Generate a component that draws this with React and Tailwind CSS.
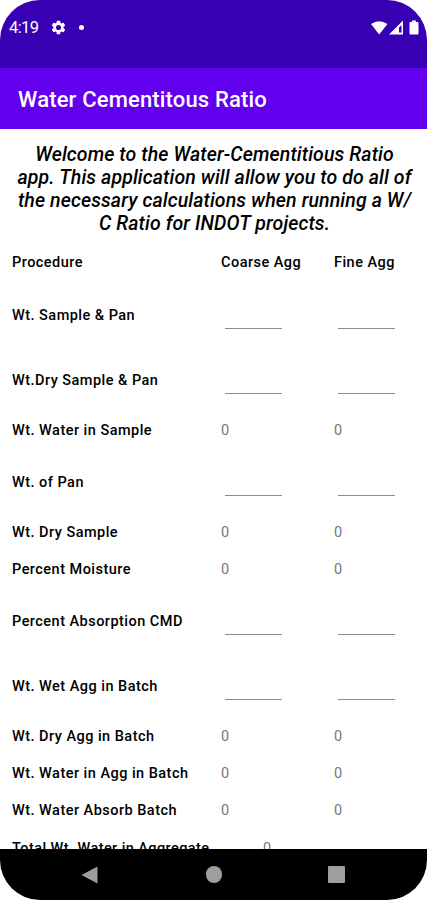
const ROWS = [
  { label: 'Wt. Sample & Pan', input: true },
  { label: 'Wt.Dry Sample & Pan', input: true },
  { label: 'Wt. Water in Sample' },
  { label: 'Wt. of Pan', input: true },
  { label: 'Wt. Dry Sample' },
  { label: 'Percent Moisture' },
  { label: 'Percent Absorption CMD', input: true },
  { label: 'Wt. Wet Agg in Batch', input: true },
  { label: 'Wt. Dry Agg in Batch' },
  { label: 'Wt. Water in Agg in Batch' },
  { label: 'Wt. Water Absorb Batch' },
];

const INTRO = [
  'Welcome to the Water-Cementitious Ratio',
  'app. This application will allow you to do all of',
  'the necessary calculations when running a W/',
  'C Ratio for INDOT projects.',
];

function StatusBar() {
  return (
    <div className="flex h-[68px] shrink-0 items-start justify-between bg-[#3700b3] pt-[17px] pl-[9px] pr-[7px] text-white">
      <div className="flex h-5 items-center">
        <span className="w-[41px] pt-0.5 text-[16.5px] leading-5 tracking-[-0.6px]">4:19</span>
        <svg className="h-[17px] w-[17px]" viewBox="0 0 24 24" fill="currentColor">
          <path d="M19.14 12.94c.04-.3.06-.61.06-.94s-.02-.64-.07-.94l2.03-1.58a.49.49 0 0 0 .12-.61l-1.92-3.32a.49.49 0 0 0-.59-.22l-2.39.96a7 7 0 0 0-1.62-.94l-.36-2.54A.48.48 0 0 0 13.92 2.400h-3.840a.48.48 0 0 0-.47.41l-.36 2.540c-.59.24-1.130.57-1.620.94l-2.390-.96a.49.49 0 0 0-.59.22L2.740 8.870a.48.48 0 0 0 .12.61l2.030 1.580c-.05.3-.09.63-.09.94s.02.64.07.94l-2.030 1.580a.49.49 0 0 0-.12.61l1.920 3.320c.12.22.37.29.59.22l2.390-.96c.5.38 1.030.7 1.620.94l.36 2.540c.05.24.24.41.48.41h3.840c.24 0 .44-.17.47-.41l.36-2.540a7 7 0 0 0 1.620-.94l2.390.96c.22.08.47 0 .59-.22l1.920-3.320a.48.48 0 0 0-.12-.61zM12 15.600a3.600 3.600 0 1 1 0-7.200 3.600 3.600 0 0 1 0 7.200z" />
        </svg>
        <span className="ml-3 h-[5px] w-[5px] rounded-full bg-white" />
      </div>
      <div className="flex h-5 items-center">
        <svg className="h-[15px] w-[50px]" viewBox="0 0 50 15" fill="currentColor">
          <path d="M1 4Q9-1.500 17.500 4L9.200 14.500z" />
          <path fillRule="evenodd" d="M19 14.500L33 0.500V14.500zM29 7.500V12.500H31.500V5z" />
          <path d="M42 0.500h4v1.500h1.500q1 0 1 1v10.500q0 1-1 1h-7q-1 0-1-1V3q0-1 1-1h1.500z" />
        </svg>
      </div>
    </div>
  );
}

function Field() {
  return (
    <div className="flex h-full items-end pb-[17px] pl-1">
      <div className="h-px w-[57px] bg-[#8c8c8c]" />
    </div>
  );
}

function Row({ label, input }) {
  return (
    <div className={`grid shrink-0 grid-cols-[209px_113px_1fr] items-center ${input ? 'h-[65px]' : 'h-[37px]'}`}>
      <div className={`font-medium whitespace-nowrap ${input ? 'pt-[5px]' : 'pt-[3px]'}`}>{label}</div>
      {input ? <Field /> : <div className="pt-[3px] text-[#777]">0</div>}
      {input ? <Field /> : <div className="pt-[3px] text-[#777]">0</div>}
    </div>
  );
}

export default function App() {
  return (
    <div className="h-[900px] w-[427px] bg-white font-[Roboto,sans-serif]">
      <div className="flex h-full flex-col overflow-hidden rounded-[40px] bg-white">
        <StatusBar />
        <header className="flex h-[61px] shrink-0 items-center bg-[#6200ee] pt-0.5 pl-[18px]">
          <h1 className="text-[22px] leading-7 font-medium tracking-[0.16px] whitespace-nowrap text-white">Water Cementitous Ratio</h1>
        </header>
        <main className="flex min-h-0 flex-1 flex-col overflow-hidden text-[14.5px] leading-[18px] tracking-[0.47px] text-black">
          <div className="flex shrink-0 flex-col items-center pt-[14px] pb-2.5 pl-[2px] text-[19.5px] leading-[23px] font-medium tracking-[0.11px] whitespace-nowrap italic">
            {INTRO.map((line) => (
              <p key={line}>{line}</p>
            ))}
          </div>
          <div className="flex flex-col pl-3">
            <div className="grid h-[36px] shrink-0 grid-cols-[209px_113px_1fr] items-center pb-px font-medium">
              <div>Procedure</div>
              <div>Coarse Agg</div>
              <div>Fine Agg</div>
            </div>
            {ROWS.map((row) => (
              <Row key={row.label} {...row} />
            ))}
            <div className="grid h-[37px] shrink-0 grid-cols-[251px_1fr] items-center pt-[4px]">
              <div className="font-medium tracking-[0.42px]">Total Wt. Water in Aggregate</div>
              <div className="text-[#777]">0</div>
            </div>
          </div>
        </main>
        <nav className="flex h-[51px] shrink-0 items-center bg-black pl-[81px] text-[#9e9e9e]">
          <svg className="h-5 w-[17px]" viewBox="0 0 17 20" fill="currentColor">
            <path d="M16.500 1.500V18.500L0.500 10z" />
          </svg>
          <span className="ml-[108px] h-[17px] w-4 rounded-full bg-[#9e9e9e]" />
          <span className="ml-[106px] h-[17px] w-[17px] rounded-[1px] bg-[#9e9e9e]" />
        </nav>
      </div>
    </div>
  );
}
